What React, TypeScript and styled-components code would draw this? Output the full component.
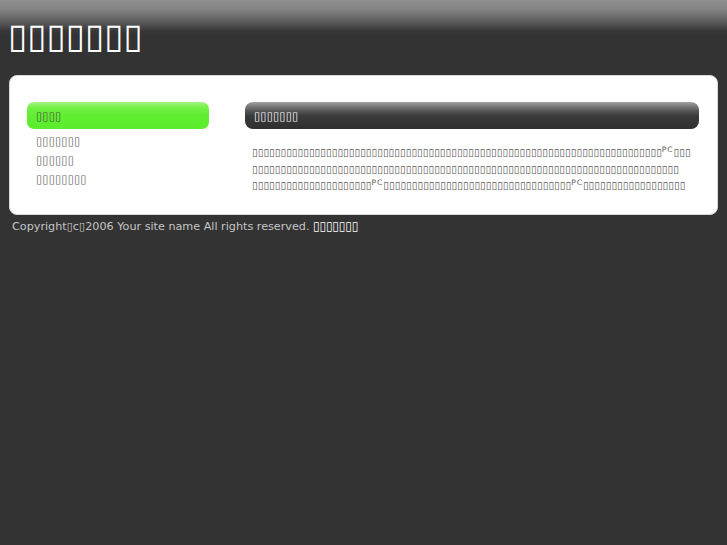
import React from "react";
import styled, { createGlobalStyle } from "styled-components";

const B = "\u25AF";
const box = (n: number) => B.repeat(n);

const GlobalStyle = createGlobalStyle`
  html, body {
    margin: 0;
    padding: 0;
    background: #333333;
  }
  body {
    font-family: "DejaVu Sans", "Liberation Sans", sans-serif;
    font-size: 11px;
    color: #555555;
  }
`;

const Page = styled.div`
  min-height: 545px;
  background: #333333;
`;

const Header = styled.header`
  height: 75px;
  background: linear-gradient(
    to bottom,
    #909090 0px,
    #848484 9px,
    #686868 18px,
    #4b4b4b 26px,
    #383838 31px,
    #333333 34px
  );
`;

const SiteTitle = styled.h1`
  margin: 0;
  padding: 16px 0 0 8px;
  font-size: 35px;
  font-weight: normal;
  line-height: 40px;
  color: #ffffff;
`;

const Panel = styled.main`
  margin: 0 9px;
  background: #ffffff;
  border: 1px solid #d8d8d8;
  border-radius: 8px;
  padding: 26px 18px 20px 17px;
  display: grid;
  grid-template-columns: 182px minmax(0, 1fr);
  column-gap: 36px;
`;

const Menu = styled.nav`
  display: flex;
  flex-direction: column;
`;

const MenuActive = styled.div`
  height: 27px;
  border-radius: 7px;
  background: linear-gradient(to bottom, #a4f487 0px, #78f04b 5px, #62ee33 12px, #5bec2c 100%);
  display: flex;
  align-items: center;
  padding-left: 9px;
  font-size: 11.5px;
  color: #4d5a47;
  margin-bottom: 3px;
`;

const MenuItem = styled.a`
  display: block;
  padding-left: 9px;
  height: 19px;
  line-height: 19px;
  font-size: 11.5px;
  color: #666666;
  text-decoration: none;
`;

const Content = styled.section`
  display: flex;
  flex-direction: column;
  min-width: 0;
`;

const HeadingBar = styled.h2`
  margin: 0;
  height: 27px;
  border-radius: 8px;
  background: linear-gradient(
    to bottom,
    #a2a2a2 0px,
    #7c7c7c 4px,
    #555555 9px,
    #3a3a3a 14px,
    #2f2f2f 100%
  );
  display: flex;
  align-items: center;
  padding-left: 9px;
  font-size: 11.5px;
  font-weight: normal;
  color: #ffffff;
`;

const Paragraph = styled.p`
  margin: 15px 0 0 0;
  padding: 0 0 0 7px;
  font-size: 10.35px;
  line-height: 16.5px;
  color: #5a5a5a;
`;

const Small = styled.span`
  font-size: 7.5px;
  line-height: 1;
  vertical-align: text-top;
  letter-spacing: 1px;
`;

const Footer = styled.footer`
  padding: 4px 0 0 12px;
  font-size: 11.2px;
  color: #c4c4c4;
`;

const FooterLink = styled.a`
  font-size: 11.7px;
  color: #ffffff;
  text-decoration: none;
`;

export default function App() {
  return (
    <Page>
      <GlobalStyle />
      <Header>
        <SiteTitle>{box(7)}</SiteTitle>
      </Header>
      <Panel>
        <Menu>
          <MenuActive>{box(4)}</MenuActive>
          <MenuItem href="#">{box(7)}</MenuItem>
          <MenuItem href="#">{box(6)}</MenuItem>
          <MenuItem href="#">{box(8)}</MenuItem>
        </Menu>
        <Content>
          <HeadingBar>{box(7)}</HeadingBar>
          <Paragraph>
            {box(72)}
            <Small>PC</Small>
            {box(3)}
            <wbr />
            {box(75)}
            <wbr />
            {box(21)}
            <Small>PC</Small>
            {box(33)}
            <Small>PC</Small>
            {box(18)}
          </Paragraph>
        </Content>
      </Panel>
      <Footer>
        Copyright{B}c{B}2006 Your site name All rights reserved.{" "}
        <FooterLink href="#">{box(7)}</FooterLink>
      </Footer>
    </Page>
  );
}
